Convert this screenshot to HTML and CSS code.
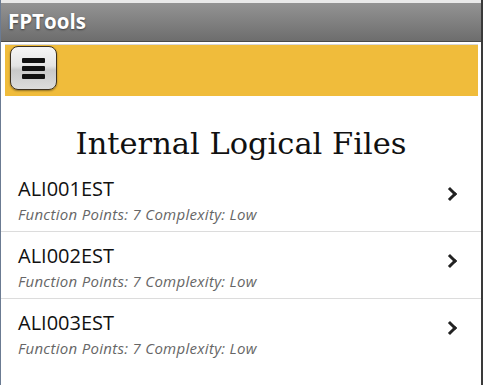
FILE: index.html
```html
<!DOCTYPE html>
<html lang="en">
    <head>
        <meta charset="UTF-8" />
        <title>FPTools</title>
        <link rel="stylesheet" href="styles.css">
    </head>

    <body>
        <div class="screen">
            <header class="titlebar">FPTools</header>

            <div class="toolbar">
                <button type="button" class="menu-button" title="Menu">
                    <span class="bar"></span>
                    <span class="bar"></span>
                    <span class="bar"></span>
                </button>
            </div>

            <h1 class="page-title">Internal Logical Files</h1>

            <ul class="file-list">
                <li class="file-item">
                    <div class="file-text">
                        <h2>ALI001EST</h2>
                        <p>Function Points: 7 Complexity: Low</p>
                    </div>
                    <span class="chevron"></span>
                </li>
                <li class="file-item">
                    <div class="file-text">
                        <h2>ALI002EST</h2>
                        <p>Function Points: 7 Complexity: Low</p>
                    </div>
                    <span class="chevron"></span>
                </li>
                <li class="file-item">
                    <div class="file-text">
                        <h2>ALI003EST</h2>
                        <p>Function Points: 7 Complexity: Low</p>
                    </div>
                    <span class="chevron"></span>
                </li>
            </ul>
        </div>
    </body>
</html>
```

FILE: styles.css
```css
html,
body {
    margin: 0;
    height: 100%;
}

body {
    font-family: "Open Sans", "Noto Sans", sans-serif;
    background-color: #fff;
}

.screen {
    box-sizing: border-box;
    height: 100%;
    padding-top: 3px;
    border-left: 1px solid #6b7b92;
    border-right: 2px solid #3a3a3a;
    background: linear-gradient(#e9e9e9 0, #e9e9e9 3px, #fff 3px);
    overflow: hidden;
}

.titlebar {
    height: 38px;
    line-height: 36px;
    padding-left: 7px;
    font-size: 20.5px;
    font-weight: bold;
    color: #fff;
    text-shadow: 0 1px 2px rgba(0, 0, 0, 0.5);
    background: linear-gradient(#939393, #6d6d6d);
    border-bottom: 1px solid #4a4a4a;
}

.toolbar {
    margin: 2px 3px 0 4px;
    height: 52px;
    padding: 1px 0 0 5px;
    box-sizing: border-box;
    background-color: #f0bc3b;
    border-top: 1px solid #d8d8d8;
}

.menu-button {
    display: flex;
    flex-direction: column;
    justify-content: center;
    align-items: center;
    gap: 3px;
    width: 47px;
    height: 44px;
    padding: 0;
    border: 1px solid #3c3020;
    border-radius: 8px;
    background: linear-gradient(#f6f6f6 0, #e4e4e4 45%, #c9c9c9 55%, #dcdcdc 100%);
    box-shadow: 0 1px 2px rgba(0, 0, 0, 0.4);
}

.menu-button .bar {
    display: block;
    width: 23px;
    height: 5px;
    border-radius: 1px;
    background-color: #111;
}

.page-title {
    margin: 27px 0 0;
    text-align: center;
    font-family: "DejaVu Serif", serif;
    font-size: 30.5px;
    font-weight: normal;
    color: #111;
    line-height: 42px;
}

.file-list {
    list-style: none;
    margin: 0;
    padding: 0;
}

.file-item {
    display: flex;
    align-items: center;
    height: 66px;
    padding: 0 26px 0 17px;
    border-bottom: 1px solid #dcdcdc;
}

.file-item:last-child {
    border-bottom: 0;
}

.file-text {
    flex: 1;
    padding-top: 4px;
}

.file-text h2 {
    margin: 0 0 1px;
    font-size: 20px;
    font-weight: normal;
    line-height: 26px;
    color: #111;
}

.file-text p {
    margin: 0;
    font-size: 15px;
    font-style: italic;
    letter-spacing: 0.3px;
    line-height: 22px;
    color: #666;
}

.chevron {
    width: 7px;
    height: 7px;
    margin-bottom: 8px;
    border-top: 3px solid #222;
    border-right: 3px solid #222;
    transform: rotate(45deg);
}
```
